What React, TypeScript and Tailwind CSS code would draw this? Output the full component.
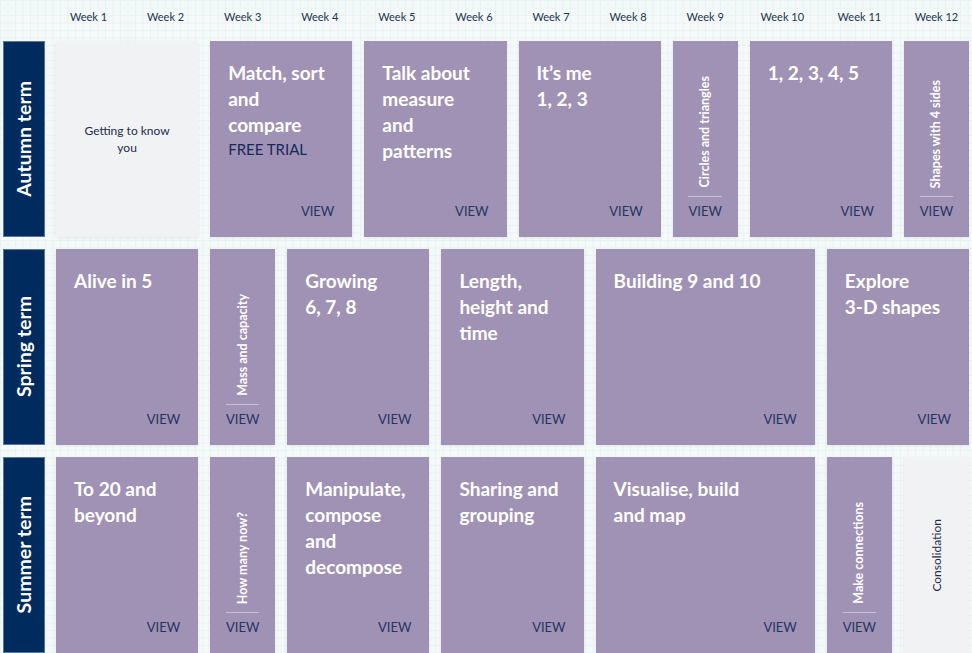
import React from "react";

type Card =
  | { kind: "gray"; span: number; text: string[]; vertical?: boolean }
  | { kind: "title"; span: number; lines: string[]; trial?: boolean }
  | { kind: "vert"; span: number; text: string };

const spanClass: Record<number, string> = {
  1: "col-span-1",
  2: "col-span-2",
  3: "col-span-3",
};

const rows: { term: string; cards: Card[] }[] = [
  {
    term: "Autumn term",
    cards: [
      { kind: "gray", span: 2, text: ["Getting to know", "you"] },
      { kind: "title", span: 2, lines: ["Match, sort", "and", "compare"], trial: true },
      { kind: "title", span: 2, lines: ["Talk about", "measure", "and", "patterns"] },
      { kind: "title", span: 2, lines: ["It’s me", "1, 2, 3"] },
      { kind: "vert", span: 1, text: "Circles and triangles" },
      { kind: "title", span: 2, lines: ["1, 2, 3, 4, 5"] },
      { kind: "vert", span: 1, text: "Shapes with 4 sides" },
    ],
  },
  {
    term: "Spring term",
    cards: [
      { kind: "title", span: 2, lines: ["Alive in 5"] },
      { kind: "vert", span: 1, text: "Mass and capacity" },
      { kind: "title", span: 2, lines: ["Growing", "6, 7, 8"] },
      { kind: "title", span: 2, lines: ["Length,", "height and", "time"] },
      { kind: "title", span: 3, lines: ["Building 9 and 10"] },
      { kind: "title", span: 2, lines: ["Explore", "3-D shapes"] },
    ],
  },
  {
    term: "Summer term",
    cards: [
      { kind: "title", span: 2, lines: ["To 20 and", "beyond"] },
      { kind: "vert", span: 1, text: "How many now?" },
      { kind: "title", span: 2, lines: ["Manipulate,", "compose", "and", "decompose"] },
      { kind: "title", span: 2, lines: ["Sharing and", "grouping"] },
      { kind: "title", span: 3, lines: ["Visualise, build", "and map"] },
      { kind: "vert", span: 1, text: "Make connections" },
      { kind: "gray", span: 1, text: ["Consolidation"], vertical: true },
    ],
  },
];

function CardView({ card }: { card: Card }) {
  const span = spanClass[card.span];
  if (card.kind === "gray") {
    return (
      <div
        className={`${span} flex items-center justify-center bg-[#f0f2f4] shadow-[0_1px_3px_rgba(0,0,0,0.08)] text-[#1d2c4e] text-[12px] leading-[17px] text-center`}
      >
        {card.vertical ? (
          <span className="[writing-mode:vertical-rl] rotate-180 whitespace-nowrap">{card.text[0]}</span>
        ) : (
          <span>
            {card.text.map((t, i) => (
              <span key={i} className="block">
                {t}
              </span>
            ))}
          </span>
        )}
      </div>
    );
  }
  if (card.kind === "vert") {
    return (
      <div
        className={`${span} flex flex-col items-center bg-[#a092b4] shadow-[0_1px_3px_rgba(0,0,0,0.08)] pb-[18px]`}
      >
        <span className="mt-auto mb-[8px] [writing-mode:vertical-rl] rotate-180 whitespace-nowrap text-white font-bold text-[12.5px] leading-[14px]">
          {card.text}
        </span>
        <div className="border-t border-[#c6bed3] pt-[6px] text-[13px] leading-[16px] text-[#263462]">VIEW</div>
      </div>
    );
  }
  return (
    <div
      className={`${span} flex flex-col bg-[#a092b4] shadow-[0_1px_3px_rgba(0,0,0,0.08)] pt-[19px] pl-[18px] pr-[18px] pb-[18px]`}
    >
      <div className="text-white font-bold text-[19px] leading-[26px]">
        {card.lines.map((l, i) => (
          <div key={i} className="whitespace-nowrap">
            {l}
          </div>
        ))}
      </div>
      {card.trial && (
        <div className="text-[#16295a] text-[15px] leading-[20px] mt-[1px]">FREE TRIAL</div>
      )}
      <div className="mt-auto self-end text-[13px] leading-[16px] text-[#263462]">VIEW</div>
    </div>
  );
}

export default function App() {
  const weeks = Array.from({ length: 12 }, (_, i) => i + 1);
  return (
    <div
      className="w-[972px] h-[653px] overflow-hidden font-['Lato','Open_Sans',sans-serif] bg-[#f5f9f9] bg-[linear-gradient(to_right,#e8f3f3_1px,transparent_1px),linear-gradient(to_bottom,#e8f3f3_1px,transparent_1px)] bg-[size:7.5px_7.5px]"
    >
      <div className="flex pl-[3px] pr-[3px] h-[41px]">
        <div className="w-[42px] mr-[11px] shrink-0" />
        <div className="flex-1 grid grid-cols-12 gap-x-[12px]">
          {weeks.map((w) => (
            <div key={w} className="pt-[10px] text-center text-[11px] leading-[14px] text-[#23344f]">
              Week {w}
            </div>
          ))}
        </div>
      </div>
      <div className="flex flex-col gap-[12px]">
        {rows.map((row) => (
          <div key={row.term} className="flex pl-[3px] pr-[3px] h-[196px]">
            <div className="w-[42px] mr-[11px] shrink-0 bg-[#002b5e] border border-[#5b7595] flex items-center justify-center">
              <span className="[writing-mode:vertical-rl] rotate-180 whitespace-nowrap text-white font-bold text-[19.5px] leading-[22px]">
                {row.term}
              </span>
            </div>
            <div className="flex-1 grid grid-cols-12 gap-x-[12px]">
              {row.cards.map((c, i) => (
                <CardView key={i} card={c} />
              ))}
            </div>
          </div>
        ))}
      </div>
    </div>
  );
}
